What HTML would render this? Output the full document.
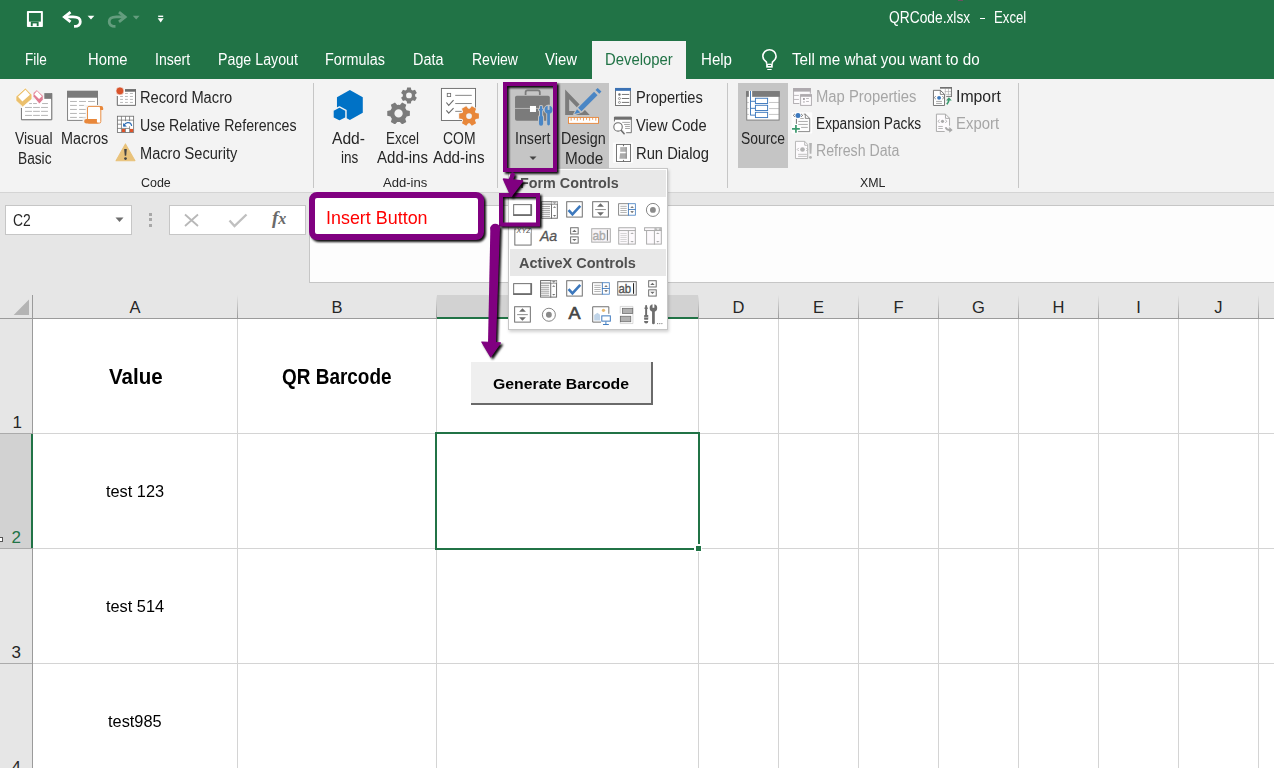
<!DOCTYPE html><html><head><meta charset="utf-8"><style>
html,body{margin:0;padding:0;width:1274px;height:768px;overflow:hidden;background:#fff}
body{position:relative;font-family:"Liberation Sans",sans-serif}
.t{position:absolute;white-space:pre}
.r{position:absolute;display:block}
</style></head><body>
<div class="r" style="left:0px;top:0px;width:1274px;height:79px;background:#217346;"></div>
<div class="r" style="left:958px;top:0px;width:5px;height:1px;background:#6b5060;"></div>
<div class="r" style="left:0px;top:79px;width:1274px;height:113px;background:#f3f3f3;"></div>
<div class="r" style="left:0px;top:192px;width:1274px;height:1px;background:#d4d4d4;"></div>
<div class="r" style="left:0px;top:193px;width:1274px;height:102px;background:#e6e6e6;"></div>
<svg class="r" style="left:15px;top:0px" width="160" height="40" viewBox="0 0 1274 318"><rect x="95" y="88" width="127" height="126" rx="6" fill="#fff"/><rect x="111" y="103" width="95" height="69" fill="#217346"/><rect x="126" y="172" width="62" height="36" fill="#217346"/><rect x="141" y="186" width="32" height="28" fill="#fff"/><path d="M392,135 H462 Q520,135 520,172 Q520,210 470,210" fill="none" stroke="#fff" stroke-width="22"/><path d="M442,96 L393,135 L442,174" fill="none" stroke="#fff" stroke-width="22"/><polygon points="578,125 632,125 605,156" fill="#fff"/><g opacity="0.3"><path d="M878,135 H808 Q750,135 750,172 Q750,210 800,210" fill="none" stroke="#fff" stroke-width="22"/><path d="M828,96 L877,135 L828,174" fill="none" stroke="#fff" stroke-width="22"/><polygon points="938,125 992,125 965,156" fill="#fff"/></g><rect x="1140" y="124" width="40" height="11" fill="#fff"/><polygon points="1136,146 1184,146 1160,178" fill="#fff"/></svg>
<div class="t" style="left:889.40px;top:10.00px;font-size:15.70px;line-height:15.70px;font-weight:normal;color:#ffffff;transform:scaleX(0.8789);transform-origin:0.00px 0;">QRCode.xlsx</div>
<div class="r" style="left:980px;top:18px;width:5px;height:1px;background:#fff;"></div>
<div class="t" style="left:993.70px;top:10.00px;font-size:15.70px;line-height:15.70px;font-weight:normal;color:#ffffff;transform:scaleX(0.8411);transform-origin:0.00px 0;">Excel</div>
<div class="r" style="left:592px;top:41px;width:94px;height:38px;background:#f3f3f3;"></div>
<div class="t" style="left:24.80px;top:52.00px;font-size:16.00px;line-height:16.00px;font-weight:normal;color:#ffffff;transform:scaleX(0.8488);transform-origin:0.00px 0;">File</div>
<div class="t" style="left:87.50px;top:52.00px;font-size:16.00px;line-height:16.00px;font-weight:normal;color:#ffffff;transform:scaleX(0.9251);transform-origin:0.00px 0;">Home</div>
<div class="t" style="left:155.40px;top:52.00px;font-size:16.00px;line-height:16.00px;font-weight:normal;color:#ffffff;transform:scaleX(0.8775);transform-origin:0.00px 0;">Insert</div>
<div class="t" style="left:218.00px;top:52.00px;font-size:16.00px;line-height:16.00px;font-weight:normal;color:#ffffff;transform:scaleX(0.8899);transform-origin:0.00px 0;">Page Layout</div>
<div class="t" style="left:325.00px;top:52.00px;font-size:16.00px;line-height:16.00px;font-weight:normal;color:#ffffff;transform:scaleX(0.8996);transform-origin:0.00px 0;">Formulas</div>
<div class="t" style="left:412.60px;top:52.00px;font-size:16.00px;line-height:16.00px;font-weight:normal;color:#ffffff;transform:scaleX(0.8994);transform-origin:0.00px 0;">Data</div>
<div class="t" style="left:471.60px;top:52.00px;font-size:16.00px;line-height:16.00px;font-weight:normal;color:#ffffff;transform:scaleX(0.8762);transform-origin:0.00px 0;">Review</div>
<div class="t" style="left:545.00px;top:52.00px;font-size:16.00px;line-height:16.00px;font-weight:normal;color:#ffffff;transform:scaleX(0.9302);transform-origin:0.00px 0;">View</div>
<div class="t" style="left:700.50px;top:52.00px;font-size:16.00px;line-height:16.00px;font-weight:normal;color:#ffffff;transform:scaleX(0.9422);transform-origin:0.00px 0;">Help</div>
<div class="t" style="left:791.80px;top:52.00px;font-size:16.00px;line-height:16.00px;font-weight:normal;color:#ffffff;transform:scaleX(0.9504);transform-origin:0.00px 0;">Tell me what you want to do</div>
<div class="t" style="left:604.80px;top:52.00px;font-size:16.00px;line-height:16.00px;font-weight:normal;color:#217346;transform:scaleX(0.9300);transform-origin:0.00px 0;">Developer</div>
<svg class="r" style="left:755px;top:45px" width="30" height="30" viewBox="0 0 768 768"><path d="M300,480 L290,430 Q200,370 200,290 A170,170 0 1 1 540,290 Q540,370 450,430 L440,480" fill="none" stroke="#fff" stroke-width="40"/><rect x="285" y="478" width="170" height="102" fill="#fff"/><rect x="330" y="512" width="80" height="24" fill="#217346"/><rect x="310" y="612" width="120" height="30" rx="15" fill="#fff"/></svg>
<div class="r" style="left:313px;top:83px;width:1px;height:105px;background:#c6c6c6;"></div>
<div class="r" style="left:497px;top:83px;width:1px;height:105px;background:#c6c6c6;"></div>
<div class="r" style="left:727px;top:83px;width:1px;height:105px;background:#c6c6c6;"></div>
<div class="r" style="left:1018px;top:83px;width:1px;height:105px;background:#c6c6c6;"></div>
<div class="t" style="left:14.50px;top:131.00px;font-size:16.00px;line-height:16.00px;font-weight:normal;color:#262626;transform:scaleX(0.8661);transform-origin:0.00px 0;">Visual</div>
<div class="t" style="left:17.50px;top:151.00px;font-size:16.00px;line-height:16.00px;font-weight:normal;color:#262626;transform:scaleX(0.8568);transform-origin:0.00px 0;">Basic</div>
<div class="t" style="left:61.40px;top:131.00px;font-size:16.00px;line-height:16.00px;font-weight:normal;color:#262626;transform:scaleX(0.8990);transform-origin:0.00px 0;">Macros</div>
<div class="t" style="left:139.50px;top:90.00px;font-size:16.00px;line-height:16.00px;font-weight:normal;color:#262626;transform:scaleX(0.9174);transform-origin:0.00px 0;">Record Macro</div>
<div class="t" style="left:139.50px;top:118.00px;font-size:16.00px;line-height:16.00px;font-weight:normal;color:#262626;transform:scaleX(0.8842);transform-origin:0.00px 0;">Use Relative References</div>
<div class="t" style="left:139.50px;top:146.00px;font-size:16.00px;line-height:16.00px;font-weight:normal;color:#262626;transform:scaleX(0.9119);transform-origin:0.00px 0;">Macro Security</div>
<div class="t" style="left:140.60px;top:176.00px;font-size:13.00px;line-height:13.00px;font-weight:normal;color:#262626;transform:scaleX(0.9582);transform-origin:0.00px 0;">Code</div>
<div class="t" style="left:332.00px;top:131.00px;font-size:16.00px;line-height:16.00px;font-weight:normal;color:#262626;transform:scaleX(0.9763);transform-origin:0.00px 0;">Add-</div>
<div class="t" style="left:340.50px;top:150.00px;font-size:16.00px;line-height:16.00px;font-weight:normal;color:#262626;transform:scaleX(0.8439);transform-origin:0.00px 0;">ins</div>
<div class="t" style="left:385.60px;top:131.00px;font-size:16.00px;line-height:16.00px;font-weight:normal;color:#262626;transform:scaleX(0.8414);transform-origin:0.00px 0;">Excel</div>
<div class="t" style="left:376.50px;top:150.00px;font-size:16.00px;line-height:16.00px;font-weight:normal;color:#262626;transform:scaleX(0.9392);transform-origin:0.00px 0;">Add-ins</div>
<div class="t" style="left:443.00px;top:131.00px;font-size:16.00px;line-height:16.00px;font-weight:normal;color:#262626;transform:scaleX(0.8713);transform-origin:0.00px 0;">COM</div>
<div class="t" style="left:433.40px;top:150.00px;font-size:16.00px;line-height:16.00px;font-weight:normal;color:#262626;transform:scaleX(0.9503);transform-origin:0.00px 0;">Add-ins</div>
<div class="t" style="left:383.20px;top:176.00px;font-size:13.00px;line-height:13.00px;font-weight:normal;color:#262626;transform:scaleX(1.0045);transform-origin:0.00px 0;">Add-ins</div>
<div class="r" style="left:508px;top:83px;width:101px;height:85px;background:#c5c5c5;"></div>
<div class="t" style="left:515.30px;top:131.00px;font-size:16.00px;line-height:16.00px;font-weight:normal;color:#262626;transform:scaleX(0.8875);transform-origin:0.00px 0;">Insert</div>
<div class="t" style="left:561.00px;top:131.00px;font-size:16.00px;line-height:16.00px;font-weight:normal;color:#262626;transform:scaleX(0.8956);transform-origin:0.00px 0;">Design</div>
<div class="t" style="left:564.50px;top:151.00px;font-size:16.00px;line-height:16.00px;font-weight:normal;color:#262626;transform:scaleX(0.9575);transform-origin:0.00px 0;">Mode</div>
<svg class="r" style="left:528px;top:155px;" width="10" height="6" viewBox="0 0 10 6"><path d="M1.5 1.5h7L5 5z" fill="#444"/></svg>
<div class="t" style="left:636.00px;top:90.00px;font-size:16.00px;line-height:16.00px;font-weight:normal;color:#262626;transform:scaleX(0.9163);transform-origin:0.00px 0;">Properties</div>
<div class="t" style="left:636.00px;top:118.00px;font-size:16.00px;line-height:16.00px;font-weight:normal;color:#262626;transform:scaleX(0.9157);transform-origin:0.00px 0;">View Code</div>
<div class="t" style="left:636.00px;top:146.00px;font-size:16.00px;line-height:16.00px;font-weight:normal;color:#262626;transform:scaleX(0.9217);transform-origin:0.00px 0;">Run Dialog</div>
<div class="r" style="left:738px;top:83px;width:50px;height:85px;background:#c5c5c5;"></div>
<div class="t" style="left:740.70px;top:131.00px;font-size:16.00px;line-height:16.00px;font-weight:normal;color:#262626;transform:scaleX(0.8659);transform-origin:0.00px 0;">Source</div>
<div class="t" style="left:815.60px;top:89.00px;font-size:16.00px;line-height:16.00px;font-weight:normal;color:#a6a6a6;transform:scaleX(0.9253);transform-origin:0.00px 0;">Map Properties</div>
<div class="t" style="left:815.60px;top:116.00px;font-size:16.00px;line-height:16.00px;font-weight:normal;color:#262626;transform:scaleX(0.8566);transform-origin:0.00px 0;">Expansion Packs</div>
<div class="t" style="left:815.60px;top:143.00px;font-size:16.00px;line-height:16.00px;font-weight:normal;color:#a6a6a6;transform:scaleX(0.8844);transform-origin:0.00px 0;">Refresh Data</div>
<div class="t" style="left:956.25px;top:89.00px;font-size:16.00px;line-height:16.00px;font-weight:normal;color:#262626;transform:scaleX(0.9879);transform-origin:0.00px 0;">Import</div>
<div class="t" style="left:956.00px;top:116.00px;font-size:16.00px;line-height:16.00px;font-weight:normal;color:#a6a6a6;transform:scaleX(0.9307);transform-origin:0.00px 0;">Export</div>
<div class="t" style="left:860.00px;top:176.00px;font-size:13.00px;line-height:13.00px;font-weight:normal;color:#262626;transform:scaleX(0.9513);transform-origin:0.00px 0;">XML</div>
<div class="r" style="left:5px;top:205px;width:127px;height:30px;background:#fff;box-sizing:border-box;border:1px solid #c6c6c6"></div>
<div class="t" style="left:12.60px;top:213.00px;font-size:16.00px;line-height:16.00px;font-weight:normal;color:#262626;transform:scaleX(0.8683);transform-origin:0.00px 0;">C2</div>
<svg class="r" style="left:114px;top:216px;" width="11" height="7" viewBox="0 0 11 7"><path d="M1.5 1.5h8L5.5 6z" fill="#6d6d6d"/></svg>
<div class="r" style="left:149px;top:213px;width:3px;height:3px;background:#a8a8a8;"></div>
<div class="r" style="left:149px;top:218px;width:3px;height:3px;background:#a8a8a8;"></div>
<div class="r" style="left:149px;top:224px;width:3px;height:3px;background:#a8a8a8;"></div>
<div class="r" style="left:169px;top:205px;width:137px;height:30px;background:#fff;box-sizing:border-box;border:1px solid #c6c6c6"></div>
<svg class="r" style="left:182px;top:212px;" width="20" height="17" viewBox="0 0 20 17"><path d="M3 2.5l13 11.5M16 2.5L3 14" stroke="#b8b8b8" stroke-width="1.8"/></svg>
<svg class="r" style="left:227px;top:212px;" width="22" height="17" viewBox="0 0 22 17"><path d="M2.5 8.5l5 5.5 12-11.5" fill="none" stroke="#c0c0c0" stroke-width="2.4"/></svg>
<div class="t" style="left:272px;top:207px;font:italic bold 19px/22px 'Liberation Serif';color:#6a6a6a">f<span style="font-size:16px">x</span></div>
<div class="r" style="left:309px;top:205px;width:965px;height:78px;background:#fdfdfd;box-sizing:border-box;border:1px solid #c6c6c6;border-right:none"></div>
<div class="r" style="left:0px;top:295px;width:1274px;height:473px;background:#fff;"></div>
<div class="r" style="left:0px;top:295px;width:1274px;height:23px;background:#e6e6e6;"></div>
<div class="r" style="left:0px;top:318px;width:32px;height:450px;background:#e6e6e6;"></div>
<div class="r" style="left:437px;top:295px;width:261px;height:23px;background:#d2d2d2;"></div>
<div class="r" style="left:0px;top:434px;width:32px;height:114px;background:#d2d2d2;"></div>
<div class="r" style="left:237px;top:319px;width:1px;height:449px;background:#d4d4d4;"></div>
<div class="r" style="left:237px;top:295px;width:1px;height:23px;background:linear-gradient(#e6e6e6,#9b9b9b);"></div>
<div class="r" style="left:436px;top:319px;width:1px;height:449px;background:#d4d4d4;"></div>
<div class="r" style="left:436px;top:295px;width:1px;height:23px;background:linear-gradient(#e6e6e6,#9b9b9b);"></div>
<div class="r" style="left:698px;top:319px;width:1px;height:449px;background:#d4d4d4;"></div>
<div class="r" style="left:698px;top:295px;width:1px;height:23px;background:linear-gradient(#e6e6e6,#9b9b9b);"></div>
<div class="r" style="left:778px;top:319px;width:1px;height:449px;background:#d4d4d4;"></div>
<div class="r" style="left:778px;top:295px;width:1px;height:23px;background:linear-gradient(#e6e6e6,#9b9b9b);"></div>
<div class="r" style="left:858px;top:319px;width:1px;height:449px;background:#d4d4d4;"></div>
<div class="r" style="left:858px;top:295px;width:1px;height:23px;background:linear-gradient(#e6e6e6,#9b9b9b);"></div>
<div class="r" style="left:938px;top:319px;width:1px;height:449px;background:#d4d4d4;"></div>
<div class="r" style="left:938px;top:295px;width:1px;height:23px;background:linear-gradient(#e6e6e6,#9b9b9b);"></div>
<div class="r" style="left:1018px;top:319px;width:1px;height:449px;background:#d4d4d4;"></div>
<div class="r" style="left:1018px;top:295px;width:1px;height:23px;background:linear-gradient(#e6e6e6,#9b9b9b);"></div>
<div class="r" style="left:1098px;top:319px;width:1px;height:449px;background:#d4d4d4;"></div>
<div class="r" style="left:1098px;top:295px;width:1px;height:23px;background:linear-gradient(#e6e6e6,#9b9b9b);"></div>
<div class="r" style="left:1178px;top:319px;width:1px;height:449px;background:#d4d4d4;"></div>
<div class="r" style="left:1178px;top:295px;width:1px;height:23px;background:linear-gradient(#e6e6e6,#9b9b9b);"></div>
<div class="r" style="left:1258px;top:319px;width:1px;height:449px;background:#d4d4d4;"></div>
<div class="r" style="left:1258px;top:295px;width:1px;height:23px;background:linear-gradient(#e6e6e6,#9b9b9b);"></div>
<div class="r" style="left:33px;top:433px;width:1241px;height:1px;background:#d4d4d4;"></div>
<div class="r" style="left:0px;top:433px;width:32px;height:1px;background:#ababab;"></div>
<div class="r" style="left:33px;top:548px;width:1241px;height:1px;background:#d4d4d4;"></div>
<div class="r" style="left:0px;top:548px;width:32px;height:1px;background:#ababab;"></div>
<div class="r" style="left:33px;top:663px;width:1241px;height:1px;background:#d4d4d4;"></div>
<div class="r" style="left:0px;top:663px;width:32px;height:1px;background:#ababab;"></div>
<div class="r" style="left:32px;top:295px;width:1px;height:473px;background:#9b9b9b;"></div>
<div class="r" style="left:0px;top:318px;width:1274px;height:1px;background:#9b9b9b;"></div>
<div class="r" style="left:437px;top:317px;width:261px;height:2px;background:#217346;"></div>
<div class="r" style="left:31px;top:434px;width:2px;height:114px;background:#217346;"></div>
<svg class="r" style="left:12px;top:298px;" width="20" height="18" viewBox="0 0 20 18"><path d="M1.7 17H17V1.5z" fill="#b4b4b4"/></svg>
<div class="t" style="left:129.50px;top:299.00px;font-size:16.50px;line-height:16.50px;font-weight:normal;color:#262626;">A</div>
<div class="t" style="left:331.50px;top:299.00px;font-size:16.50px;line-height:16.50px;font-weight:normal;color:#262626;">B</div>
<div class="t" style="left:561.55px;top:299.00px;font-size:16.50px;line-height:16.50px;font-weight:normal;color:#262626;">C</div>
<div class="t" style="left:732.55px;top:299.00px;font-size:16.50px;line-height:16.50px;font-weight:normal;color:#262626;">D</div>
<div class="t" style="left:813.00px;top:299.00px;font-size:16.50px;line-height:16.50px;font-weight:normal;color:#262626;">E</div>
<div class="t" style="left:893.45px;top:299.00px;font-size:16.50px;line-height:16.50px;font-weight:normal;color:#262626;">F</div>
<div class="t" style="left:972.10px;top:299.00px;font-size:16.50px;line-height:16.50px;font-weight:normal;color:#262626;">G</div>
<div class="t" style="left:1052.55px;top:299.00px;font-size:16.50px;line-height:16.50px;font-weight:normal;color:#262626;">H</div>
<div class="t" style="left:1136.20px;top:299.00px;font-size:16.50px;line-height:16.50px;font-weight:normal;color:#262626;">I</div>
<div class="t" style="left:1214.35px;top:299.00px;font-size:16.50px;line-height:16.50px;font-weight:normal;color:#262626;">J</div>
<div class="t" style="left:12.50px;top:414.00px;font-size:17.00px;line-height:17.00px;font-weight:normal;color:#262626;">1</div>
<div class="t" style="left:11.60px;top:529.00px;font-size:17.00px;line-height:17.00px;font-weight:normal;color:#217346;">2</div>
<div class="t" style="left:11.60px;top:644.00px;font-size:17.00px;line-height:17.00px;font-weight:normal;color:#262626;">3</div>
<div class="t" style="left:11.60px;top:759.00px;font-size:17.00px;line-height:17.00px;font-weight:normal;color:#262626;">4</div>
<div class="r" style="left:0px;top:537px;width:3px;height:5px;background:#fff;box-sizing:border-box;border:1px solid #555;border-left:none"></div>
<div class="t" style="left:108.80px;top:366.00px;font-size:22.00px;line-height:22.00px;font-weight:bold;color:#000;transform:scaleX(0.9322);transform-origin:0.00px 0;">Value</div>
<div class="t" style="left:282.00px;top:366.00px;font-size:22.00px;line-height:22.00px;font-weight:bold;color:#000;transform:scaleX(0.8615);transform-origin:0.00px 0;">QR Barcode</div>
<div class="t" style="left:106.00px;top:484.00px;font-size:15.70px;line-height:15.70px;font-weight:normal;color:#000;transform:scaleX(1.0411);transform-origin:0.00px 0;">test 123</div>
<div class="t" style="left:106.00px;top:599.00px;font-size:15.70px;line-height:15.70px;font-weight:normal;color:#000;transform:scaleX(1.0411);transform-origin:0.00px 0;">test 514</div>
<div class="t" style="left:108.30px;top:714.00px;font-size:15.70px;line-height:15.70px;font-weight:normal;color:#000;transform:scaleX(1.0427);transform-origin:0.00px 0;">test985</div>
<div class="r" style="left:435px;top:432px;width:265px;height:118px;background:transparent;box-sizing:border-box;border:2px solid #217346"></div>
<div class="r" style="left:694px;top:544px;width:8px;height:8px;background:#fff;"></div>
<div class="r" style="left:696px;top:546px;width:5px;height:5px;background:#217346;"></div>
<div class="r" style="left:471px;top:362px;width:182px;height:43px;background:#efefef;box-sizing:border-box;border-right:2px solid #6a6a6a;border-bottom:2px solid #6a6a6a"></div>
<div class="t" style="left:493.00px;top:376.00px;font-size:15.50px;line-height:15.50px;font-weight:bold;color:#000;transform:scaleX(1.0187);transform-origin:0.00px 0;">Generate Barcode</div>
<svg class="r" style="left:12px;top:84px;" width="48" height="40" viewBox="0 0 921.6 768.0"><path d="M182,460 V685 H762 V180" fill="#fff" stroke="#7b7b7b" stroke-width="19"/><path d="M182,300 H762 V685 H182Z" fill="#fff"/><path d="M182,460 V685 H762 V180" fill="none" stroke="#7b7b7b" stroke-width="19"/><rect x="620" y="175" width="148" height="110" fill="#7b7b7b"/><path d="M250,450H383" stroke="#9a9a9a" stroke-width="14"/><path d="M405,450H535" stroke="#9a9a9a" stroke-width="14"/><path d="M558,450H690" stroke="#9a9a9a" stroke-width="14"/><path d="M250,525H383" stroke="#9a9a9a" stroke-width="14"/><path d="M405,525H535" stroke="#9a9a9a" stroke-width="14"/><path d="M558,525H690" stroke="#9a9a9a" stroke-width="14"/><path d="M250,603H383" stroke="#9a9a9a" stroke-width="14"/><path d="M405,603H535" stroke="#9a9a9a" stroke-width="14"/><path d="M558,603H690" stroke="#9a9a9a" stroke-width="14"/><path d="M330,375H383" stroke="#9a9a9a" stroke-width="14"/><path d="M405,375H478" stroke="#9a9a9a" stroke-width="14"/><path d="M578,375H690" stroke="#9a9a9a" stroke-width="14"/><polygon points="75,240 258,75 383,205 383,290 205,440 75,320" fill="#ebc06d" stroke="#fff" stroke-width="14" stroke-linejoin="round"/><polygon points="115,245 258,110 345,205 200,335" fill="#fff"/><polygon points="405,175 478,110 598,225 598,300 525,385 405,240" fill="#e17c92" stroke="#fff" stroke-width="14" stroke-linejoin="round"/><polygon points="425,195 480,135 575,235 520,290" fill="#fff"/></svg>
<svg class="r" style="left:62px;top:86px;" width="48" height="40" viewBox="0 0 921.6 768.0"><rect x="107" y="100" width="575" height="560" fill="#fff" stroke="#7b7b7b" stroke-width="18"/><rect x="98" y="95" width="592" height="130" fill="#7b7b7b"/><path d="M155,297H285" stroke="#9a9a9a" stroke-width="14"/><path d="M328,297H460" stroke="#9a9a9a" stroke-width="14"/><path d="M500,297H632" stroke="#9a9a9a" stroke-width="14"/><path d="M155,373H285" stroke="#9a9a9a" stroke-width="14"/><path d="M328,373H460" stroke="#9a9a9a" stroke-width="14"/><path d="M155,450H285" stroke="#9a9a9a" stroke-width="14"/><path d="M328,450H460" stroke="#9a9a9a" stroke-width="14"/><path d="M155,527H285" stroke="#9a9a9a" stroke-width="14"/><path d="M328,527H460" stroke="#9a9a9a" stroke-width="14"/><path d="M155,603H285" stroke="#9a9a9a" stroke-width="14"/><path d="M328,603H460" stroke="#9a9a9a" stroke-width="14"/><path d="M420,380 H790 V480 H760 V730 H410 V620 H470 V380Z" fill="#f3f3f3" stroke="#f3f3f3" stroke-width="30"/><rect x="490" y="392" width="255" height="320" rx="28" fill="#fff" stroke="#e8873a" stroke-width="18"/><path d="M720,384 H752 Q790,384 790,425 V462 H736Z" fill="#e8873a"/><path d="M470,634 H670 V680 Q670,718 708,718 H470 Q425,718 425,676 Q425,634 470,634Z" fill="#e8873a"/></svg>
<svg class="r" style="left:114px;top:84px;" width="26" height="26" viewBox="0 0 768.0 768.0"><path d="M100,355 V630 H635 V150" fill="#fff" stroke="#6d6d6d" stroke-width="26"/><path d="M100,225H635V630H100Z" fill="#fff"/><path d="M100,355 V630 H635 V150" fill="none" stroke="#6d6d6d" stroke-width="26"/><rect x="325" y="150" width="320" height="78" fill="#6d6d6d"/><path d="M325,280H410" stroke="#a0a0a0" stroke-width="22"/><path d="M470,280H560" stroke="#a0a0a0" stroke-width="22"/><path d="M180,368H265" stroke="#a0a0a0" stroke-width="22"/><path d="M325,368H410" stroke="#a0a0a0" stroke-width="22"/><path d="M470,368H560" stroke="#a0a0a0" stroke-width="22"/><path d="M180,455H265" stroke="#a0a0a0" stroke-width="22"/><path d="M325,455H410" stroke="#a0a0a0" stroke-width="22"/><path d="M470,455H560" stroke="#a0a0a0" stroke-width="22"/><path d="M180,545H265" stroke="#a0a0a0" stroke-width="22"/><path d="M325,545H410" stroke="#a0a0a0" stroke-width="22"/><path d="M470,545H560" stroke="#a0a0a0" stroke-width="22"/><circle cx="175" cy="205" r="118" fill="#d9532b" stroke="#f3f3f3" stroke-width="20"/></svg>
<svg class="r" style="left:114px;top:112px;" width="26" height="26" viewBox="0 0 768.0 768.0"><rect x="100" y="125" width="480" height="480" fill="#fff" stroke="#6d6d6d" stroke-width="24"/><rect x="230" y="500" width="95" height="92" fill="#e0542a"/><rect x="470" y="500" width="95" height="92" fill="#e0542a"/><path d="M220,125V605 M100,240H580 M340,125V270 M460,125V270 M100,360H220 M100,485H220 M220,485H460 M460,420V605 M340,485V605" stroke="#6d6d6d" stroke-width="22"/><path d="M520,400 Q500,300 400,315 Q330,325 290,400" fill="none" stroke="#fff" stroke-width="60"/><path d="M520,400 Q500,300 400,315 Q330,325 290,400" fill="none" stroke="#2e6db4" stroke-width="34" stroke-linecap="round"/><polygon points="265,325 275,438 380,430" fill="#2e6db4"/></svg>
<svg class="r" style="left:114px;top:140px;" width="26" height="26" viewBox="0 0 768.0 768.0"><polygon points="338,115 620,610 60,610" fill="#e9c27a" stroke="#e9c27a" stroke-width="30" stroke-linejoin="round"/><polygon points="300,268 378,268 360,465 318,465" fill="#444"/><circle cx="340" cy="548" r="40" fill="#444"/></svg>
<svg class="r" style="left:328px;top:84px;" width="40" height="40" viewBox="0 0 768.0 768.0"><polygon points="420,115 668,255 668,550 420,690 172,550 172,255" fill="#0072c6"/><polygon points="220,440 345,505 345,650 220,715 95,650 95,505" fill="#0072c6" stroke="#f3f3f3" stroke-width="28" stroke-linejoin="round"/></svg>
<svg class="r" style="left:382px;top:84px;overflow:hidden" width="40" height="40" viewBox="0 0 768.0 768.0"><path d="M562.2,110.6 L553.5,66.0 L482.5,66.0 L473.8,110.6 L459.0,117.8 L445.4,127.0 L402.4,112.2 L366.9,173.8 L401.1,203.6 L400.0,220.0 L401.1,236.4 L366.9,266.2 L402.4,327.8 L445.4,313.0 L459.0,322.2 L473.8,329.4 L482.5,374.0 L553.5,374.0 L562.2,329.4 L577.0,322.2 L590.6,313.0 L633.6,327.8 L669.1,266.2 L634.9,236.4 L636.0,220.0 L634.9,203.6 L669.1,173.8 L633.6,112.2 L590.6,127.0 L577.0,117.8Z M573.0,220.0 a55,55 0 1 0 -110,0 a55,55 0 1 0 110,0Z" fill="#7b7b7b" fill-rule="evenodd"/><path d="M472.0,624.1 L535.1,611.2 L535.1,518.8 L472.0,505.9 L460.9,482.5 L446.2,461.2 L466.5,400.0 L386.6,353.9 L343.8,402.0 L318.0,400.0 L292.2,402.0 L249.4,353.9 L169.5,400.0 L189.8,461.2 L175.1,482.5 L164.0,505.9 L100.9,518.8 L100.9,611.2 L164.0,624.1 L175.1,647.5 L189.8,668.8 L169.5,730.0 L249.4,776.1 L292.2,728.0 L318.0,730.0 L343.8,728.0 L386.6,776.1 L466.5,730.0 L446.2,668.8 L460.9,647.5Z M398.0,565.0 a80,80 0 1 0 -160,0 a80,80 0 1 0 160,0Z" fill="#f3f3f3" stroke="#f3f3f3" stroke-width="30" stroke-linejoin="round"/><path d="M472.0,624.1 L535.1,611.2 L535.1,518.8 L472.0,505.9 L460.9,482.5 L446.2,461.2 L466.5,400.0 L386.6,353.9 L343.8,402.0 L318.0,400.0 L292.2,402.0 L249.4,353.9 L169.5,400.0 L189.8,461.2 L175.1,482.5 L164.0,505.9 L100.9,518.8 L100.9,611.2 L164.0,624.1 L175.1,647.5 L189.8,668.8 L169.5,730.0 L249.4,776.1 L292.2,728.0 L318.0,730.0 L343.8,728.0 L386.6,776.1 L466.5,730.0 L446.2,668.8 L460.9,647.5Z M398.0,565.0 a80,80 0 1 0 -160,0 a80,80 0 1 0 160,0Z" fill="#7b7b7b" fill-rule="evenodd"/></svg>
<svg class="r" style="left:437px;top:84px;overflow:visible" width="40" height="40" viewBox="0 0 768.0 768.0"><rect x="85" y="85" width="655" height="615" fill="#fff" stroke="#6d6d6d" stroke-width="18"/><rect x="197" y="180" width="65" height="62" fill="none" stroke="#6d6d6d" stroke-width="16"/><path d="M350,218H668 M350,375H668 M350,525H475" stroke="#6d6d6d" stroke-width="16"/><path d="M180,355 L225,410 L318,310 M180,505 L225,560 L318,465" fill="none" stroke="#6d6d6d" stroke-width="22"/><path d="M742.9,671.9 L804.2,662.2 L804.2,567.8 L742.9,558.1 L736.2,545.0 L728.3,532.7 L750.5,474.7 L668.7,427.6 L629.6,475.8 L615.0,475.0 L600.4,475.8 L561.3,427.6 L479.5,474.7 L501.7,532.7 L493.8,545.0 L487.1,558.1 L425.8,567.8 L425.8,662.2 L487.1,671.9 L493.8,685.0 L501.7,697.3 L479.5,755.3 L561.3,802.4 L600.4,754.2 L615.0,755.0 L629.6,754.2 L668.7,802.4 L750.5,755.3 L728.3,697.3 L736.2,685.0Z M670.0,615.0 a55,55 0 1 0 -110,0 a55,55 0 1 0 110,0Z" fill="#f3f3f3" stroke="#f3f3f3" stroke-width="34" stroke-linejoin="round"/><path d="M742.9,671.9 L804.2,662.2 L804.2,567.8 L742.9,558.1 L736.2,545.0 L728.3,532.7 L750.5,474.7 L668.7,427.6 L629.6,475.8 L615.0,475.0 L600.4,475.8 L561.3,427.6 L479.5,474.7 L501.7,532.7 L493.8,545.0 L487.1,558.1 L425.8,567.8 L425.8,662.2 L487.1,671.9 L493.8,685.0 L501.7,697.3 L479.5,755.3 L561.3,802.4 L600.4,754.2 L615.0,755.0 L629.6,754.2 L668.7,802.4 L750.5,755.3 L728.3,697.3 L736.2,685.0Z M670.0,615.0 a55,55 0 1 0 -110,0 a55,55 0 1 0 110,0Z" fill="#e8873a" fill-rule="evenodd"/></svg>
<svg class="r" style="left:510px;top:86px;" width="46" height="42" viewBox="0 0 840.9 767.8"><path d="M285,165 V118 Q285,82 320,82 H510 Q545,82 545,118 V165" fill="none" stroke="#7b7b7b" stroke-width="32"/><rect x="92" y="180" width="636" height="455" rx="32" fill="#7b7b7b"/><path d="M92,410H380" stroke="#c9c9c9" stroke-width="14"/><rect x="365" y="365" width="110" height="110" fill="#fff"/><path d="M510,330 H790 V740 H510Z" fill="none"/><path d="M475,410H520" stroke="#c9c9c9" stroke-width="14"/><g fill="#c5c5c5" stroke="#c5c5c5" stroke-width="36" stroke-linejoin="round"><rect x="548" y="365" width="40" height="185" rx="12"/><rect x="530" y="420" width="72" height="25"/><rect x="530" y="540" width="75" height="185" rx="36"/><circle cx="705" cy="432" r="72"/><rect x="680" y="440" width="50" height="280" rx="25"/></g><g fill="#4a86c5" stroke="none" stroke-width="0" stroke-linejoin="round"><rect x="548" y="365" width="40" height="185" rx="12"/><rect x="530" y="420" width="72" height="25"/><rect x="530" y="540" width="75" height="185" rx="36"/><circle cx="705" cy="432" r="72"/><rect x="680" y="440" width="50" height="280" rx="25"/></g><rect x="688" y="345" width="34" height="92" fill="#c5c5c5"/></svg>
<svg class="r" style="left:562px;top:84px;" width="44" height="44" viewBox="0 0 767.8 767.8"><path d="M55,95 L485,540 H55Z M125,265 V470 H320Z" fill="#7b7b7b" fill-rule="evenodd"/><polygon points="215,528 280,410 585,105 690,140 345,480" fill="#c5c5c5" stroke="#c5c5c5" stroke-width="40" stroke-linejoin="round"/><polygon points="280,415 560,135 620,195 340,475" fill="#4a86c5"/><polygon points="215,525 262,440 322,497" fill="#4a86c5"/><polygon points="585,105 622,68 688,130 652,168" fill="#4a86c5"/><rect x="113" y="583" width="524" height="104" fill="#fff" stroke="#e8873a" stroke-width="16"/><path d="M160,590V640" stroke="#e8873a" stroke-width="14"/><path d="M215,590V625" stroke="#e8873a" stroke-width="14"/><path d="M268,590V640" stroke="#e8873a" stroke-width="14"/><path d="M320,590V625" stroke="#e8873a" stroke-width="14"/><path d="M375,590V640" stroke="#e8873a" stroke-width="14"/><path d="M428,590V625" stroke="#e8873a" stroke-width="14"/><path d="M482,590V640" stroke="#e8873a" stroke-width="14"/><path d="M535,590V625" stroke="#e8873a" stroke-width="14"/><path d="M590,590V640" stroke="#e8873a" stroke-width="14"/></svg>
<svg class="r" style="left:611px;top:86px;" width="24" height="24" viewBox="0 0 768.0 768.0"><rect x="145" y="85" width="475" height="540" fill="#fff" stroke="#6d6d6d" stroke-width="30"/><rect x="130" y="62" width="510" height="93" fill="#3b72b4"/><circle cx="270" cy="270" r="38" fill="#6d6d6d"/><circle cx="270" cy="400" r="32" fill="none" stroke="#6d6d6d" stroke-width="22"/><circle cx="270" cy="525" r="32" fill="none" stroke="#6d6d6d" stroke-width="22"/><path d="M360,270H570 M360,400H570 M360,525H570" stroke="#6d6d6d" stroke-width="30" stroke-linecap="round"/></svg>
<svg class="r" style="left:611px;top:113px;" width="24" height="24" viewBox="0 0 768.0 768.0"><path d="M110,270V130H650V630H485" fill="#fff" stroke="#6d6d6d" stroke-width="30"/><rect x="100" y="130" width="565" height="85" fill="#6d6d6d"/><path d="M360,300H605 M420,367H605 M450,430H605 M450,495H605" stroke="#7a7a7a" stroke-width="22"/><circle cx="225" cy="445" r="150" fill="#fff" stroke="#f3f3f3" stroke-width="40"/><path d="M330,560L425,670" stroke="#f3f3f3" stroke-width="100" stroke-linecap="round"/><circle cx="225" cy="445" r="135" fill="#fff" stroke="#6d6d6d" stroke-width="34"/><path d="M330,560L420,665" stroke="#6d6d6d" stroke-width="50" stroke-linecap="round"/></svg>
<svg class="r" style="left:611px;top:141px;" width="24" height="24" viewBox="0 0 768.0 768.0"><rect x="60" y="50" width="640" height="655" rx="30" fill="#fcfcfc"/><rect x="175" y="110" width="450" height="545" fill="#fff" stroke="#6d6d6d" stroke-width="30"/><path d="M400,110V150 M400,615V655" stroke="#6d6d6d" stroke-width="34" stroke-linecap="round"/><rect x="295" y="195" width="200" height="150" fill="#b3b3b3"/><polygon points="268,565 290,390 500,390 500,565" fill="#ababab"/><path d="M488,195V565" stroke="#7d7d7d" stroke-width="28"/></svg>
<svg class="r" style="left:743px;top:87px;" width="40" height="36" viewBox="0 0 853.2 767.9"><rect x="80" y="100" width="690" height="605" fill="#fff" stroke="#7b7b7b" stroke-width="20"/><rect x="65" y="88" width="720" height="122" fill="#7b7b7b"/><rect x="125" y="82" width="70" height="135" fill="#fff"/><path d="M80,330H125 M80,460H125 M80,585H125 M555,330H770 M555,460H770 M555,585H770" stroke="#9c9c9c" stroke-width="12"/><path d="M160,85V605 M160,305H265 M160,455H265 M160,600H265" stroke="#3c78bd" stroke-width="20" fill="none"/><rect x="265" y="240" width="260" height="112" fill="#fff" stroke="#3c78bd" stroke-width="20"/><rect x="265" y="390" width="260" height="112" fill="#fff" stroke="#3c78bd" stroke-width="20"/><rect x="265" y="540" width="260" height="112" fill="#fff" stroke="#3c78bd" stroke-width="20"/></svg>
<svg class="r" style="left:790px;top:86px;" width="24" height="24" viewBox="0 0 768.0 768.0"><rect x="115" y="80" width="535" height="480" fill="#fdfbfd" stroke="#aeaaae" stroke-width="30"/><rect x="100" y="70" width="565" height="110" fill="#aeaaae"/><path d="M130,300H285 M130,430H285" stroke="#aeaaae" stroke-width="26"/><rect x="300" y="245" width="420" height="410" fill="#f3f3f3"/><rect x="340" y="280" width="345" height="340" fill="#fdfbfd" stroke="#aeaaae" stroke-width="30"/><rect x="330" y="265" width="365" height="80" fill="#aeaaae"/><rect x="415" y="385" width="60" height="60" fill="#a09ca0"/><rect x="415" y="480" width="60" height="60" fill="#d0cdd0"/><path d="M515,400H605 M515,495H605" stroke="#aeaaae" stroke-width="26"/></svg>
<svg class="r" style="left:790px;top:111px;" width="24" height="24" viewBox="0 0 768.0 768.0"><rect x="50" y="40" width="660" height="680" rx="30" fill="#fdfdfd"/><path d="M490,100 L630,235 V660 H260 M490,100 V235 H630" fill="none" stroke="#6d6d6d" stroke-width="26"/><path d="M490,100H440" stroke="#6d6d6d" stroke-width="26"/><circle cx="255" cy="140" r="80" fill="#3c78bd"/><path d="M155,95 L105,140 L155,185 M355,95 L405,140 L355,185" fill="none" stroke="#6d6d6d" stroke-width="30"/><path d="M205,265V400" stroke="#6d6d6d" stroke-width="30" stroke-linecap="round"/><path d="M265,335H570 M265,430H570 M355,525H570 M330,240H440" stroke="#8a8a8a" stroke-width="22"/><path d="M65,575H315 M190,450V695" stroke="#3b9a6e" stroke-width="55"/></svg>
<svg class="r" style="left:790px;top:139px;" width="24" height="24" viewBox="0 0 768.0 768.0"><path d="M175,75 H470 L565,175 V625 H175Z" fill="#fdfbfd" stroke="#b3b3b3" stroke-width="30"/><path d="M470,75V200H565" fill="none" stroke="#b3b3b3" stroke-width="30"/><circle cx="400" cy="335" r="75" fill="#b3b3b3"/><path d="M280,285 L230,335 L280,385 M520,285 L570,335 L520,385" fill="none" stroke="#b3b3b3" stroke-width="30"/><path d="M260,490H540 M260,555H540" stroke="#b3b3b3" stroke-width="26"/><polygon points="615,130 700,130 685,470 630,470" fill="#b3b3b3"/><circle cx="655" cy="590" r="45" fill="#b3b3b3"/></svg>
<svg class="r" style="left:930px;top:85px;" width="24" height="24" viewBox="0 0 768.0 768.0"><rect x="300" y="50" width="420" height="345" fill="#f3f3f3"/><path d="M335,115 V360 H685 V75" fill="#fff" stroke="none"/><path d="M490,115V330 M590,115V330 M470,210H685 M470,300H685" stroke="#a8a8a8" stroke-width="20"/><path d="M685,65V375 M520,365H700" stroke="#6d6d6d" stroke-width="30"/><rect x="320" y="65" width="380" height="52" fill="#6d6d6d"/><path d="M110,170 H330 L465,300 V655 H110Z" fill="#fff" stroke="#f3f3f3" stroke-width="70" stroke-linejoin="round"/><path d="M110,170 H330 L465,300 V655 H110Z" fill="#fff" stroke="#6d6d6d" stroke-width="30"/><path d="M330,170V300H465" fill="none" stroke="#6d6d6d" stroke-width="26"/><circle cx="290" cy="410" r="62" fill="#3c78bd"/><path d="M185,355 L135,405 L185,450 M395,355 L445,405 L395,450" fill="none" stroke="#6d6d6d" stroke-width="26"/><path d="M195,525H380 M195,590H380" stroke="#8a8a8a" stroke-width="24"/><path d="M535,615 Q605,560 605,450" fill="none" stroke="#3b9a6e" stroke-width="55"/><polygon points="515,495 605,395 695,495" fill="#3b9a6e"/></svg>
<svg class="r" style="left:930px;top:111px;" width="24" height="24" viewBox="0 0 768.0 768.0"><path d="M625,470 V230 L495,100 H205 V655 H470" fill="#fdfbfd" stroke="#a8a8a8" stroke-width="30"/><path d="M495,100V235H625" fill="none" stroke="#a8a8a8" stroke-width="30"/><circle cx="400" cy="330" r="50" fill="#a8a8a8"/><path d="M305,285 L255,330 L305,380 M490,285 L540,330 L490,380" fill="none" stroke="#a8a8a8" stroke-width="30"/><path d="M265,495H410 M265,560H410" stroke="#a8a8a8" stroke-width="26"/><path d="M500,520 Q520,610 640,610" fill="none" stroke="#a8a8a8" stroke-width="55"/><polygon points="615,515 725,605 615,695" fill="#a8a8a8"/></svg>
<div class="r" style="left:508px;top:168px;width:160px;height:162px;box-sizing:border-box;background:#fff;border:1px solid #c6c6c6;box-shadow:1px 2px 3px rgba(0,0,0,0.18)"></div>
<div class="r" style="left:510px;top:170px;width:156px;height:27px;background:#e8e8e8;"></div>
<div class="r" style="left:510px;top:249px;width:156px;height:27px;background:#e8e8e8;"></div>
<div class="t" style="left:519.80px;top:176.00px;font-size:14.50px;line-height:14.50px;font-weight:bold;color:#505050;transform:scaleX(0.9890);transform-origin:0.00px 0;">Form Controls</div>
<div class="t" style="left:519.00px;top:256.00px;font-size:14.50px;line-height:14.50px;font-weight:bold;color:#505050;transform:scaleX(1.0009);transform-origin:0.00px 0;">ActiveX Controls</div>
<svg class="r" style="left:508px;top:198px;overflow:visible" width="80" height="50" viewBox="0 0 1228.8 768.0"><rect x="87" y="102" width="270" height="160" fill="#fff" stroke="#6d6d6d" stroke-width="15"/><path d="M80,262H365 M357,95V270" stroke="#6d6d6d" stroke-width="26"/><rect x="512" y="57" width="246" height="254" fill="#fff" stroke="#6d6d6d" stroke-width="15"/><path d="M505,95H765 M668,50V318" stroke="#6d6d6d" stroke-width="15"/><rect x="668" y="57" width="90" height="38" fill="#e0e0e0"/><polygon points="690,68 740,68 715,90" fill="#6d6d6d"/><path d="M517,130H645" stroke="#6a6a6a" stroke-width="10"/><path d="M517,160H645" stroke="#6a6a6a" stroke-width="10"/><path d="M517,190H645" stroke="#6a6a6a" stroke-width="10"/><path d="M517,220H645" stroke="#6a6a6a" stroke-width="10"/><path d="M517,250H645" stroke="#6a6a6a" stroke-width="10"/><path d="M517,283H645" stroke="#6a6a6a" stroke-width="10"/><polygon points="690,150 715,128 740,150" fill="#6d6d6d"/><polygon points="690,262 715,288 740,262" fill="#6d6d6d"/><rect x="902" y="57" width="239" height="236" fill="#fff" stroke="#6d6d6d" stroke-width="15"/><path d="M930,185 L990,250 L1110,120" fill="none" stroke="#3c78bd" stroke-width="40"/><rect x="105" y="477" width="250" height="246" fill="#fff" stroke="#6d6d6d" stroke-width="15"/><rect x="125" y="445" width="225" height="95" fill="#fff"/><text x="132" y="530" font-family="Liberation Sans" font-style="italic" font-size="110" fill="#555" textLength="215" lengthAdjust="spacingAndGlyphs">XYZ</text><text x="490" y="668" font-family="Liberation Sans" font-style="italic" font-size="225" fill="#555" stroke="#555" stroke-width="5" textLength="265" lengthAdjust="spacingAndGlyphs">Aa</text><rect x="962" y="457" width="116" height="96" fill="#fff" stroke="#6d6d6d" stroke-width="15"/><rect x="962" y="597" width="116" height="96" fill="#fff" stroke="#6d6d6d" stroke-width="15"/><polygon points="985,522 1020,488 1055,522" fill="#6d6d6d"/><polygon points="985,628 1020,662 1055,628" fill="#6d6d6d"/></svg>
<svg class="r" style="left:588px;top:198px;overflow:visible" width="80" height="50" viewBox="0 0 1228.8 768.0"><rect x="72" y="57" width="241" height="236" fill="#fff" stroke="#6d6d6d" stroke-width="15"/><polygon points="140,135 192,80 245,135" fill="#6d6d6d"/><path d="M110,178H275" stroke="#6d6d6d" stroke-width="12"/><polygon points="140,220 192,272 245,220" fill="#6d6d6d"/><rect x="471" y="88" width="149" height="176" fill="#fff" stroke="#6d6d6d" stroke-width="12"/><path d="M497,128H595" stroke="#8a8a8a" stroke-width="10"/><path d="M497,160H595" stroke="#8a8a8a" stroke-width="10"/><path d="M497,192H595" stroke="#8a8a8a" stroke-width="10"/><path d="M497,222H595" stroke="#8a8a8a" stroke-width="10"/><rect x="620" y="88" width="107" height="88" fill="#fff" stroke="#3c78bd" stroke-width="12"/><rect x="620" y="176" width="107" height="88" fill="#fff" stroke="#3c78bd" stroke-width="12"/><polygon points="650,150 677,125 705,150" fill="#555"/><polygon points="650,205 677,230 705,205" fill="#555"/><circle cx="997" cy="183" r="100" fill="#fff" stroke="#555" stroke-width="11"/><circle cx="997" cy="183" r="45" fill="#8a8a8a"/><rect x="57" y="472" width="286" height="206" fill="#f8f5f8" stroke="#ababab" stroke-width="15"/><text x="68" y="642" font-family="Liberation Sans" font-size="205" fill="#aaa" stroke="#aaa" stroke-width="6" textLength="205" lengthAdjust="spacingAndGlyphs">ab</text><path d="M298,490V655" stroke="#777" stroke-width="15"/><rect x="472" y="457" width="255" height="251" fill="#fdfafd" stroke="#ababab" stroke-width="15"/><path d="M465,500H733 M620,500V715" stroke="#ababab" stroke-width="15"/><path d="M497,545H595" stroke="#c0c0c0" stroke-width="10"/><path d="M920,545H995" stroke="#c0c0c0" stroke-width="10"/><path d="M497,575H595" stroke="#c0c0c0" stroke-width="10"/><path d="M920,575H995" stroke="#c0c0c0" stroke-width="10"/><path d="M497,605H595" stroke="#c0c0c0" stroke-width="10"/><path d="M920,605H995" stroke="#c0c0c0" stroke-width="10"/><path d="M497,637H595" stroke="#c0c0c0" stroke-width="10"/><path d="M920,637H995" stroke="#c0c0c0" stroke-width="10"/><path d="M497,668H595" stroke="#c0c0c0" stroke-width="10"/><path d="M920,668H995" stroke="#c0c0c0" stroke-width="10"/><polygon points="650,552 677,530 705,552" fill="#ababab"/><polygon points="650,662 677,685 705,662" fill="#ababab"/><rect x="869" y="457" width="257" height="43" fill="#fdfafd" stroke="#ababab" stroke-width="15"/><rect x="1020" y="457" width="113" height="43" fill="#bbb"/><polygon points="1050,470 1100,470 1075,492" fill="#fff"/><rect x="900" y="500" width="226" height="208" fill="#fdfafd" stroke="#ababab" stroke-width="15"/><path d="M1020,500V715" stroke="#ababab" stroke-width="15"/><polygon points="1045,552 1072,530 1100,552" fill="#ababab"/><polygon points="1045,662 1072,685 1100,662" fill="#ababab"/></svg>
<svg class="r" style="left:508px;top:277px;overflow:visible" width="80" height="50" viewBox="0 0 1228.8 768.0"><rect x="87" y="102" width="270" height="160" fill="#fff" stroke="#6d6d6d" stroke-width="15"/><path d="M80,262H365 M357,95V270" stroke="#6d6d6d" stroke-width="26"/><rect x="500" y="55" width="246" height="254" fill="#fff" stroke="#6d6d6d" stroke-width="15"/><path d="M493,93H753 M656,48V316" stroke="#6d6d6d" stroke-width="15"/><rect x="656" y="55" width="90" height="38" fill="#e0e0e0"/><polygon points="678,66 728,66 703,88" fill="#6d6d6d"/><path d="M505,128H633" stroke="#6a6a6a" stroke-width="10"/><path d="M505,158H633" stroke="#6a6a6a" stroke-width="10"/><path d="M505,188H633" stroke="#6a6a6a" stroke-width="10"/><path d="M505,218H633" stroke="#6a6a6a" stroke-width="10"/><path d="M505,248H633" stroke="#6a6a6a" stroke-width="10"/><path d="M505,281H633" stroke="#6a6a6a" stroke-width="10"/><polygon points="678,148 703,126 728,148" fill="#6d6d6d"/><polygon points="678,260 703,286 728,260" fill="#6d6d6d"/><rect x="902" y="57" width="239" height="236" fill="#fff" stroke="#6d6d6d" stroke-width="15"/><path d="M930,185 L990,250 L1110,120" fill="none" stroke="#3c78bd" stroke-width="40"/><rect x="102" y="457" width="241" height="236" fill="#fff" stroke="#6d6d6d" stroke-width="15"/><polygon points="170,535 222,480 275,535" fill="#6d6d6d"/><path d="M140,578H305" stroke="#6d6d6d" stroke-width="12"/><polygon points="170,620 222,672 275,620" fill="#6d6d6d"/><circle cx="628" cy="580" r="100" fill="#fff" stroke="#555" stroke-width="11"/><circle cx="628" cy="580" r="45" fill="#8a8a8a"/><text x="930" y="640" font-family="Liberation Sans" font-size="265" fill="#444" stroke="#444" stroke-width="10" textLength="185" lengthAdjust="spacingAndGlyphs">A</text></svg>
<svg class="r" style="left:588px;top:277px;overflow:visible" width="80" height="50" viewBox="0 0 1228.8 768.0"><rect x="71" y="88" width="149" height="176" fill="#fff" stroke="#6d6d6d" stroke-width="12"/><path d="M97,128H195" stroke="#8a8a8a" stroke-width="10"/><path d="M97,160H195" stroke="#8a8a8a" stroke-width="10"/><path d="M97,192H195" stroke="#8a8a8a" stroke-width="10"/><path d="M97,222H195" stroke="#8a8a8a" stroke-width="10"/><rect x="220" y="88" width="107" height="88" fill="#fff" stroke="#3c78bd" stroke-width="12"/><rect x="220" y="176" width="107" height="88" fill="#fff" stroke="#3c78bd" stroke-width="12"/><polygon points="250,150 277,125 305,150" fill="#555"/><polygon points="250,205 277,230 305,205" fill="#555"/><rect x="457" y="72" width="284" height="206" fill="#fff" stroke="#6d6d6d" stroke-width="15"/><text x="468" y="244" font-family="Liberation Sans" font-size="205" fill="#555" stroke="#555" stroke-width="6" textLength="195" lengthAdjust="spacingAndGlyphs">ab</text><path d="M700,95V258" stroke="#111" stroke-width="15"/><rect x="932" y="57" width="116" height="96" fill="#fff" stroke="#6d6d6d" stroke-width="15"/><rect x="932" y="197" width="116" height="96" fill="#fff" stroke="#6d6d6d" stroke-width="15"/><polygon points="955,122 990,88 1025,122" fill="#6d6d6d"/><polygon points="955,228 990,262 1025,228" fill="#6d6d6d"/><path d="M320,565V457H72V693H200" fill="none" stroke="#6d6d6d" stroke-width="15"/><circle cx="238" cy="512" r="25" fill="#e8b86d"/><polygon points="95,670 95,585 145,550 185,580 185,670" fill="#c0d4e8"/><rect x="212" y="597" width="131" height="81" fill="#fff" stroke="#3c78bd" stroke-width="15"/><path d="M275,685V730 M230,730H320" stroke="#3c78bd" stroke-width="15"/><path d="M495,560V452H690V715H495V600" fill="none" stroke="#c4c4c4" stroke-width="10"/><rect x="528" y="481" width="159" height="78" fill="#b0b0b0" stroke="#6d6d6d" stroke-width="12"/><rect x="498" y="603" width="159" height="84" fill="#b0b0b0" stroke="#6d6d6d" stroke-width="12"/><path d="M893,445V590" stroke="#6d6d6d" stroke-width="30" stroke-linecap="round"/><path d="M868,480H918" stroke="#6d6d6d" stroke-width="22"/><rect x="862" y="584" width="63" height="72" rx="6" fill="#6d6d6d"/><path d="M862,620H925" stroke="#fff" stroke-width="8"/><path d="M862,676H925V684A31,31 0 0 1 862,684Z" fill="#6d6d6d"/><path d="M1005,520V705" stroke="#6d6d6d" stroke-width="42" stroke-linecap="round"/><circle cx="1005" cy="478" r="58" fill="#6d6d6d"/><rect x="991" y="415" width="28" height="58" fill="#fff"/><circle cx="1070" cy="715" r="9" fill="#6d6d6d"/><circle cx="1103" cy="715" r="9" fill="#6d6d6d"/><circle cx="1135" cy="715" r="9" fill="#6d6d6d"/></svg>
<svg class="r" style="left:490px;top:70px;filter:drop-shadow(2px 2px 1px rgba(0,0,0,0.95))" width="90" height="120" viewBox="0 0 90 120"><rect x="15" y="14" width="50" height="86" fill="none" stroke="#800080" stroke-width="4"/></svg>
<svg class="r" style="left:490px;top:180px;filter:drop-shadow(2px 2px 1px rgba(0,0,0,0.95))" width="70" height="60" viewBox="0 0 70 60"><rect x="11" y="15" width="37" height="29.5" fill="none" stroke="#800080" stroke-width="4"/></svg>
<svg class="r" style="left:300px;top:180px;filter:drop-shadow(2px 2px 1px rgba(0,0,0,0.95))" width="200" height="70" viewBox="0 0 200 70"><rect x="12" y="15" width="169" height="42" rx="5" fill="#fff" stroke="#800080" stroke-width="6"/></svg>
<div class="t" style="left:326.40px;top:209.00px;font-size:18.40px;line-height:18.40px;font-weight:normal;color:#ff0000;transform:scaleX(0.9741);transform-origin:0.00px 0;">Insert Button</div>
<svg class="r" style="left:470px;top:215px;filter:drop-shadow(2px 2px 1px rgba(0,0,0,0.95))" width="50" height="155" viewBox="0 0 50 155"><path d="M20.4,12 Q25.2,8 30,12 L26,128 H18Z" fill="#800080"/><circle cx="25.2" cy="13.5" r="4.8" fill="#800080"/><polygon points="11.8,127 30.4,127.8 20.6,141.8" fill="#800080" stroke="#800080" stroke-width="1.2" stroke-linejoin="round"/></svg>
<svg class="r" style="left:495px;top:165px;filter:drop-shadow(2px 2px 1px rgba(0,0,0,0.95))" width="40" height="40" viewBox="0 0 40 40"><path d="M17.6,9.6 L14,20" stroke="#800080" stroke-width="4.4" stroke-linecap="round"/><polygon points="8.5,14.1 27.6,16.1 16.3,31.1" fill="#800080" stroke="#800080" stroke-width="1.5" stroke-linejoin="round"/></svg>
</body></html>
